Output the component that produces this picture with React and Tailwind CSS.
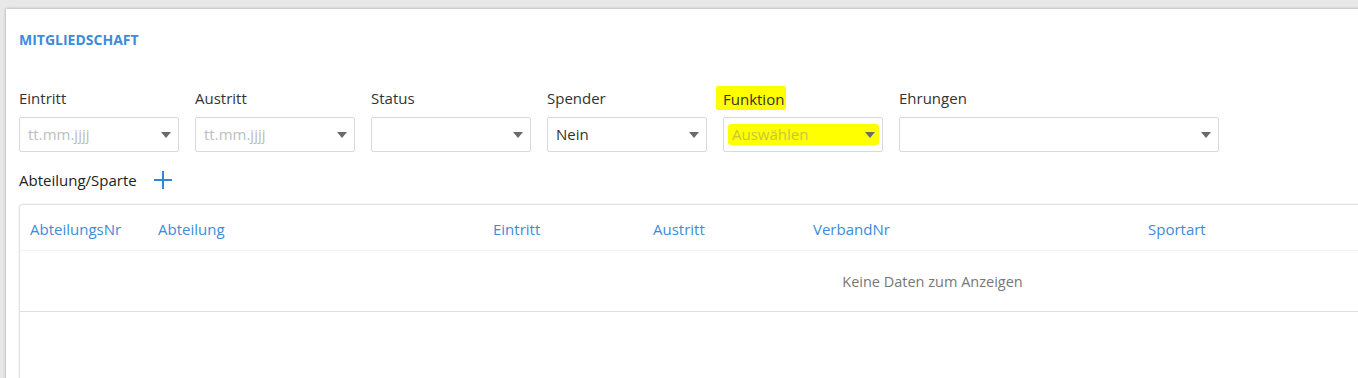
const fields = [
  { label: "Eintritt", value: "tt.mm.jjjj", placeholder: true, w: "w-[160px]" },
  { label: "Austritt", value: "tt.mm.jjjj", placeholder: true, w: "w-[160px]" },
  { label: "Status", value: "", w: "w-[160px]" },
  { label: "Spender", value: "Nein", w: "w-[160px]" },
  { label: "Funktion", value: "Auswählen", placeholder: true, highlight: true, w: "w-[160px]" },
  { label: "Ehrungen", value: "", w: "w-[320px]" },
];

const columns = [
  { name: "AbteilungsNr", w: "w-[128px]" },
  { name: "Abteilung", w: "w-[335px]" },
  { name: "Eintritt", w: "w-[160px]" },
  { name: "Austritt", w: "w-[160px]" },
  { name: "VerbandNr", w: "w-[335px]" },
  { name: "Sportart", w: "w-[300px]" },
];

function Caret() {
  return (
    <svg width="10" height="6" viewBox="0 0 10 6" className="shrink-0">
      <path d="M0 0h10L5 6z" fill="#6b6b6b" />
    </svg>
  );
}

function Field({ field }) {
  return (
    <div className={`flex flex-col ${field.w}`}>
      <div className="h-[20px] flex items-center text-[15px] text-[#333]">
        <span className={field.highlight ? "bg-[#ffff00] pl-[7px] pr-[2px] -ml-[7px] pt-[2px] rounded-[2px]" : ""}>
          {field.label}
        </span>
      </div>
      <div className="mt-[9px] h-[35px] border border-[#d9d9d9] rounded-[2px] flex items-center pl-[4px] pr-[3px]">
        <div
          className={`flex-1 flex items-center justify-between pl-[4px] pr-[4px] h-[21px] ${
            field.highlight ? "bg-[#ffff00] rounded-[3px]" : ""
          }`}
        >
          <span
            className={`text-[15px] ${
              field.highlight ? "text-[#c6c640]" : field.placeholder ? "text-[#bdbdbd]" : "text-[#333]"
            }`}
          >
            {field.value}
          </span>
          <Caret />
        </div>
      </div>
    </div>
  );
}

export default function App() {
  return (
    <div
      className="w-screen h-[378px] overflow-hidden bg-[#e8e8e8] pt-[9px] pl-[6px]"
      style={{ fontFamily: '"Open Sans", "Noto Sans", sans-serif' }}
    >
      <div className="w-[1900px] h-[420px] bg-white shadow-[0_0_3px_rgba(0,0,0,0.3)] pl-[13px]">
        <h2 className="pt-[20px] text-[14px] font-bold text-[#3d8bd8]">MITGLIEDSCHAFT</h2>

        <div className="mt-[38px] flex gap-[16px]">
          {fields.map((f) => (
            <Field key={f.label} field={f} />
          ))}
        </div>

        <div className="mt-[18px] flex items-center gap-[17px] h-[20px]">
          <span className="text-[15px] text-[#222]">Abteilung/Sparte</span>
          <svg width="18" height="18" viewBox="0 0 18 18">
            <path d="M9 0v18M0 9h18" stroke="#2f86d6" strokeWidth="2" />
          </svg>
        </div>

        <div className="mt-[14px] w-[1827px] border border-[#e2e2e2] rounded-[3px] shadow-[0_0_2px_rgba(0,0,0,0.12)]">
          <div className="flex h-[46px] items-center pl-[10px] pt-[4px] border-b border-[#f3f3f3]">
            {columns.map((c) => (
              <div key={c.name} className={`${c.w} text-[15px] text-[#3d8bd8]`}>
                {c.name}
              </div>
            ))}
          </div>
          <div className="h-[61px] flex items-center justify-center pt-[2px] border-b border-[#dedede] text-[14.5px] text-[#777]">
            Keine Daten zum Anzeigen
          </div>
          <div className="h-[80px]" />
        </div>
      </div>
    </div>
  );
}
